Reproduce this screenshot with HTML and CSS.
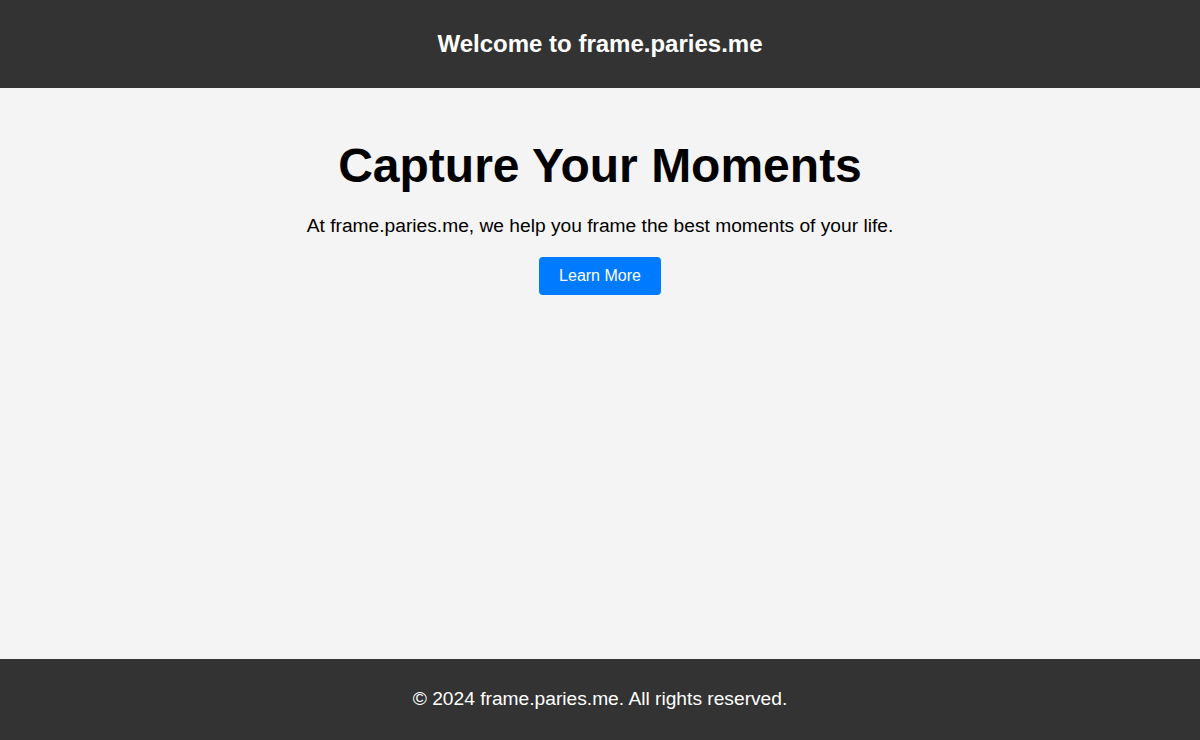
FILE: index.html
```html
<!DOCTYPE html>
<html lang="en">
<head>
<meta charset="utf-8">
<title>frame.paries.me</title>
<link rel="stylesheet" href="styles.css">
</head>
<body>
<div class="page">
  <header class="site-header">
    <h1 class="site-title">Welcome to frame.paries.me</h1>
  </header>
  <main class="hero">
    <h2 class="hero-title">Capture Your Moments</h2>
    <p class="hero-text">At frame.paries.me, we help you frame the best moments of your life.</p>
    <a class="hero-button" href="#">Learn More</a>
  </main>
  <footer class="site-footer">
    <p class="footer-text">&copy; 2024 frame.paries.me. All rights reserved.</p>
  </footer>
</div>
</body>
</html>
```

FILE: styles.css
```css
html, body {
  margin: 0;
  padding: 0;
}
body {
  font-family: "Liberation Sans", Arial, sans-serif;
  background: #f4f4f4;
  color: #000;
}
.page {
  display: flex;
  flex-direction: column;
  min-height: 100vh;
}
.site-header {
  background: #333333;
  color: #ffffff;
  text-align: center;
  padding: 30px 0;
}
.site-title {
  margin: 0;
  font-size: 24px;
  line-height: 28px;
  font-weight: bold;
}
.hero {
  flex: 1;
  display: flex;
  flex-direction: column;
  align-items: center;
  text-align: center;
  padding-top: 50px;
}
.hero-title {
  margin: 0 0 22px;
  font-size: 48px;
  line-height: 55px;
  font-weight: bold;
}
.hero-text {
  margin: 0 0 20px;
  font-size: 19.2px;
  line-height: 22px;
}
.hero-button {
  display: inline-block;
  background: #007bff;
  color: #ffffff;
  text-decoration: none;
  font-size: 16px;
  line-height: 18px;
  padding: 10px 20px;
  border-radius: 4px;
}
.site-footer {
  background: #333333;
  color: #ffffff;
  text-align: center;
  padding: 29px 0 30px;
}
.footer-text {
  margin: 0;
  font-size: 19.2px;
  line-height: 22px;
}
```
